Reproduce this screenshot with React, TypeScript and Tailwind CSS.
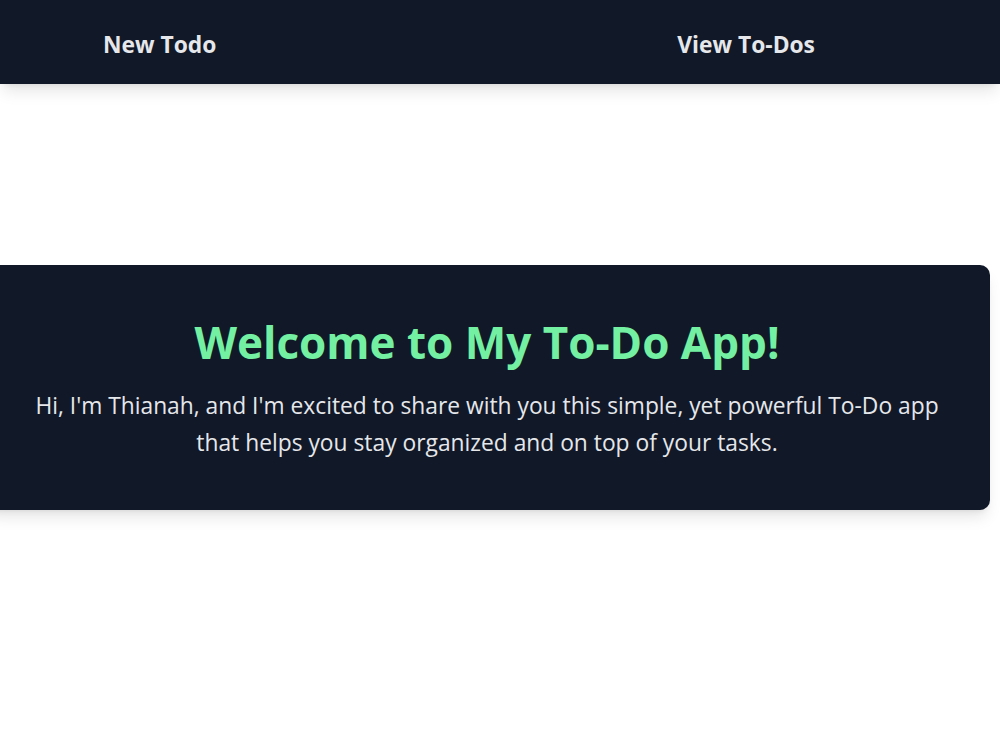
import React from "react";

export default function App() {
  return (
    <div className="min-h-[750px] bg-white overflow-hidden" style={{ fontFamily: '"Open Sans", "Noto Sans", sans-serif' }}>
      <nav className="h-[84px] bg-[#111827] shadow-lg flex items-center pt-[6px] text-[#e5e7eb] font-bold text-[22.8px]">
        <a className="ml-[103px]">New Todo</a>
        <a className="ml-[461px]">View To-Dos</a>
      </nav>
      <section className="mt-[181px] -ml-4 w-[1006px] h-[245px] bg-[#111827] rounded-[10px] shadow-lg flex flex-col items-center justify-center text-center pt-[6px]">
        <h1 className="text-[#74f0a2] font-bold text-[44px] leading-none">Welcome to My To-Do App!</h1>
        <p className="mt-[23px] text-[#e5e7eb] text-[22.8px] leading-[37px] max-w-[940px]">
          Hi, I'm Thianah, and I'm excited to share with you this simple, yet powerful To-Do app that helps you stay organized and on top of your tasks.
        </p>
      </section>
    </div>
  );
}
